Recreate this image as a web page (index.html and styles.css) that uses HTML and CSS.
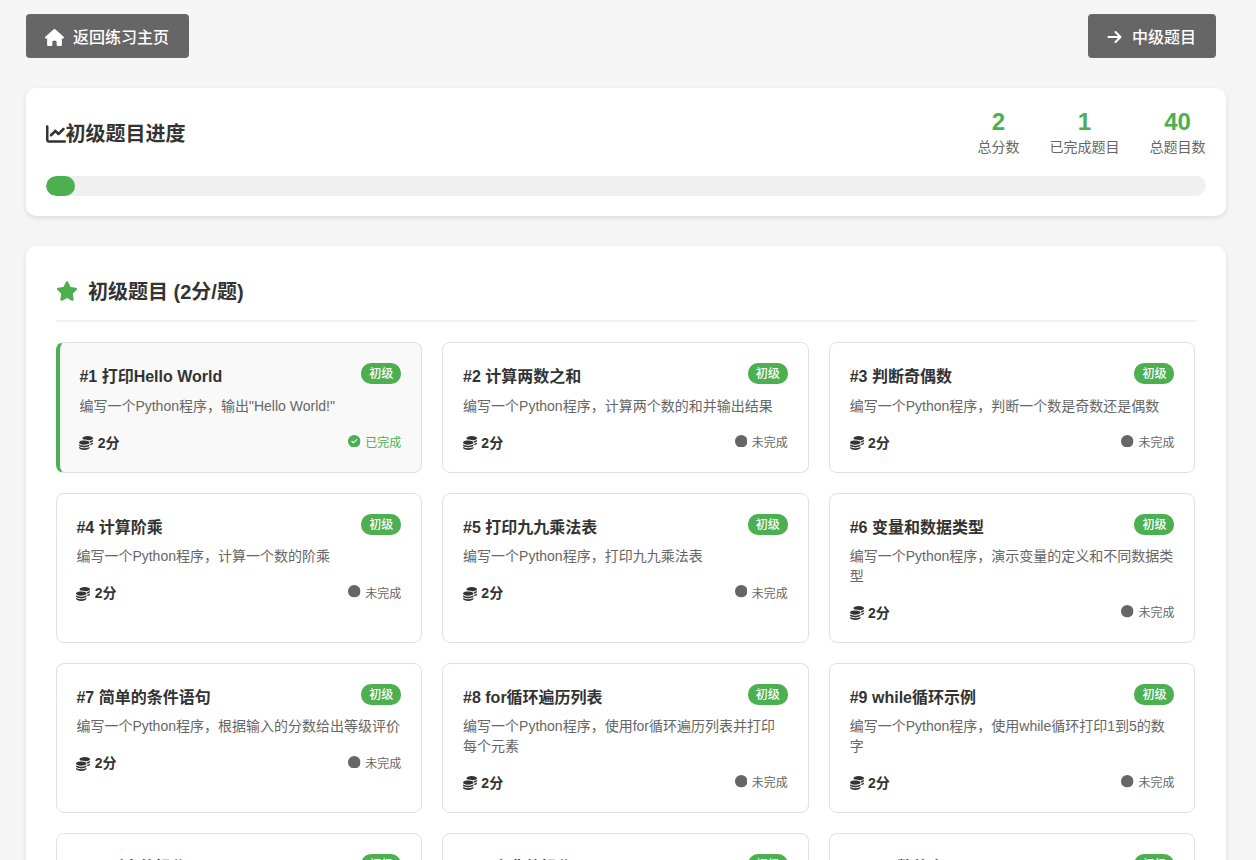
FILE: index.html
```html
<!DOCTYPE html>
<html lang="zh-CN">
<head>
<meta charset="utf-8">
<title>初级题目</title>
<link rel="stylesheet" href="styles.css">
</head>
<body>
<svg class="sprite" width="0" height="0" aria-hidden="true">
<symbol id="i-home" viewBox="0 0 576 512"><path d="M575.8 255.5c0 18-15 32.1-32 32.1h-32l.7 160.2c0 2.7-.2 5.4-.5 8.1V472c0 22.1-17.9 40-40 40H456c-1.1 0-2.2 0-3.3-.1c-1.4 .1-2.8 .1-4.2 .1H416 392c-22.1 0-40-17.9-40-40V448 384c0-17.7-14.3-32-32-32H256c-17.7 0-32 14.3-32 32v64 24c0 22.1-17.9 40-40 40H160 128.1c-1.5 0-3-.1-4.5-.2c-1.2 .1-2.4 .2-3.6 .2H104c-22.1 0-40-17.9-40-40V360c0-.9 0-1.9 .1-2.8V287.6H32c-18 0-32-14-32-32.1c0-9 3-17 10-24L266.4 8c7-7 15-8 22-8s15 2 21 7L564.8 231.5c8 7 12 15 11 24z"/></symbol>
<symbol id="i-arrow" viewBox="0 0 448 512"><path d="M438.6 278.6c12.5-12.5 12.5-32.8 0-45.3l-160-160c-12.5-12.5-32.8-12.5-45.3 0s-12.5 32.8 0 45.3L338.8 224 32 224c-17.7 0-32 14.3-32 32s14.3 32 32 32l306.7 0L233.4 393.4c-12.5 12.5-12.5 32.8 0 45.3s32.8 12.5 45.3 0l160-160z"/></symbol>
<symbol id="i-chart" viewBox="0 0 512 512"><path d="M64 64c0-17.7-14.3-32-32-32S0 46.3 0 64V400c0 44.2 35.8 80 80 80H480c17.7 0 32-14.3 32-32s-14.3-32-32-32H80c-8.8 0-16-7.2-16-16V64zm406.6 86.6c12.5-12.5 12.5-32.8 0-45.3s-32.8-12.5-45.3 0L320 210.7l-57.4-57.4c-12.5-12.5-32.8-12.5-45.3 0l-112 112c-12.5 12.5-12.5 32.8 0 45.3s32.8 12.5 45.3 0L240 221.3l57.4 57.4c12.5 12.5 32.8 12.5 45.3 0l128-128z"/></symbol>
<symbol id="i-star" viewBox="0 0 576 512"><path d="M316.9 18C311.6 7 300.4 0 288.1 0s-23.4 7-28.8 18L195 150.3 51.4 171.5c-12 1.8-22 10.2-25.7 21.7s-.7 24.2 7.9 32.7L137.8 329 113.2 474.7c-2 12 3 24.2 12.9 31.3s23 8 33.8 2.3l128.3-68.5 128.3 68.5c10.8 5.7 23.9 4.9 33.8-2.3s14.9-19.3 12.9-31.3L438.5 329 542.7 225.9c8.6-8.5 11.7-21.2 7.9-32.7s-13.7-19.9-25.7-21.7L381.2 150.3 316.9 18z"/></symbol>
<symbol id="i-coins" viewBox="0 0 512 512"><path d="M512 80c0 18-14.3 34.6-38.4 48c-29.1 16.1-72.5 27.5-122.3 30.9c-3.7-1.8-7.4-3.5-11.3-5C300.6 137.4 248.2 128 192 128c-8.3 0-16.4 .2-24.5 .6l-1.1-.6C142.3 114.6 128 98 128 80c0-44.2 86-80 192-80S512 35.8 512 80zM160.7 161.1c10.2-.7 20.7-1.1 31.3-1.1c62.2 0 117.4 12.3 152.5 31.4C369.3 204.9 384 221.7 384 240c0 4-.7 7.9-2.1 11.7c-4.6 13.2-17 25.3-35 35.5c0 0 0 0 0 0c-.1 .1-.3 .1-.4 .2l0 0 0 0c-.3 .2-.6 .3-.9 .5c-35 19.4-90.8 32-153.6 32c-59.6 0-112.9-11.3-148.2-29.1c-1.9-.9-3.7-1.9-5.5-2.9C14.3 274.6 0 258 0 240c0-34.8 53.4-64.5 128-75.4c10.5-1.5 21.4-2.7 32.7-3.5zM416 240c0-21.9-10.6-39.9-24.1-53.4c28.3-4.4 54.2-11.4 76.2-20.5c16.3-6.8 31.5-15.2 43.9-25.5V176c0 19.3-16.5 37.1-43.8 50.9c-14.6 7.4-32.4 13.7-52.4 18.5c.1-1.8 .2-3.5 .2-5.3zm-32 96c0 18-14.3 34.6-38.4 48c-1.8 1-3.6 1.9-5.5 2.9C304.9 404.7 251.6 416 192 416c-62.8 0-118.6-12.6-153.6-32C14.3 370.6 0 354 0 336V300.6c12.5 10.3 27.6 18.7 43.9 25.5C83.4 342.6 135.8 352 192 352s108.6-9.4 148.1-25.9c7.8-3.2 15.3-6.9 22.4-10.9c6.1-3.4 11.8-7.2 17.2-11.2c1.5-1.1 2.9-2.3 4.3-3.4V304v5.7V336zm32 0V304 278.1c19-4.2 36.5-9.5 52.1-16c16.3-6.8 31.5-15.2 43.9-25.5V272c0 10.5-5 21-14.9 30.9c-16.3 16.3-45 29.7-81 38.4c.1-1.7 .1-3.5 .1-5.3zM192 448c56.2 0 108.6-9.4 148.1-25.9c16.3-6.8 31.5-15.2 43.9-25.5V432c0 44.2-86 80-192 80S0 476.2 0 432V396.6c12.5 10.3 27.6 18.7 43.9 25.5C83.4 438.6 135.8 448 192 448z"/></symbol>
<symbol id="i-check" viewBox="0 0 512 512"><path d="M256 512A256 256 0 1 0 256 0a256 256 0 1 0 0 512zM369 209L241 337c-9.4 9.4-24.6 9.4-33.9 0l-64-64c-9.4-9.4-9.4-24.6 0-33.9s24.6-9.4 33.9 0l47 47L335 175c9.4-9.4 24.6-9.4 33.9 0s9.4 24.6 0 33.9z"/></symbol>
<symbol id="i-circle" viewBox="0 0 512 512"><circle cx="256" cy="256" r="256"/></symbol>
</svg>
<div class="page">
  <nav class="topbar">
    <a class="btn"><svg class="btn-icon home"><use href="#i-home"/></svg>返回练习主页</a>
    <a class="btn"><svg class="btn-icon arrow"><use href="#i-arrow"/></svg>中级题目</a>
  </nav>

  <section class="progress-card">
    <div class="progress-head">
      <h2 class="progress-title"><svg class="chart"><use href="#i-chart"/></svg>初级题目进度</h2>
      <div class="stats">
        <div class="stat"><div class="stat-num">2</div><div class="stat-label">总分数</div></div>
        <div class="stat"><div class="stat-num">1</div><div class="stat-label">已完成题目</div></div>
        <div class="stat"><div class="stat-num">40</div><div class="stat-label">总题目数</div></div>
      </div>
    </div>
    <div class="bar"><div class="bar-fill" style="width:2.5%"></div></div>
  </section>

  <section class="section">
    <h2 class="section-title"><svg class="star"><use href="#i-star"/></svg>初级题目 (2分/题)</h2>
    <div class="grid">
      <article class="card done">
        <div class="card-head"><h3 class="card-title">#1 打印Hello World</h3><span class="badge">初级</span></div>
        <p class="desc">编写一个Python程序，输出"Hello World!"</p>
        <div class="card-foot"><span class="points"><svg class="coins"><use href="#i-coins"/></svg>2分</span><span class="status ok"><svg class="dot"><use href="#i-check"/></svg>已完成</span></div>
      </article>
      <article class="card">
        <div class="card-head"><h3 class="card-title">#2 计算两数之和</h3><span class="badge">初级</span></div>
        <p class="desc">编写一个Python程序，计算两个数的和并输出结果</p>
        <div class="card-foot"><span class="points"><svg class="coins"><use href="#i-coins"/></svg>2分</span><span class="status"><svg class="dot"><use href="#i-circle"/></svg>未完成</span></div>
      </article>
      <article class="card">
        <div class="card-head"><h3 class="card-title">#3 判断奇偶数</h3><span class="badge">初级</span></div>
        <p class="desc">编写一个Python程序，判断一个数是奇数还是偶数</p>
        <div class="card-foot"><span class="points"><svg class="coins"><use href="#i-coins"/></svg>2分</span><span class="status"><svg class="dot"><use href="#i-circle"/></svg>未完成</span></div>
      </article>
      <article class="card">
        <div class="card-head"><h3 class="card-title">#4 计算阶乘</h3><span class="badge">初级</span></div>
        <p class="desc">编写一个Python程序，计算一个数的阶乘</p>
        <div class="card-foot"><span class="points"><svg class="coins"><use href="#i-coins"/></svg>2分</span><span class="status"><svg class="dot"><use href="#i-circle"/></svg>未完成</span></div>
      </article>
      <article class="card">
        <div class="card-head"><h3 class="card-title">#5 打印九九乘法表</h3><span class="badge">初级</span></div>
        <p class="desc">编写一个Python程序，打印九九乘法表</p>
        <div class="card-foot"><span class="points"><svg class="coins"><use href="#i-coins"/></svg>2分</span><span class="status"><svg class="dot"><use href="#i-circle"/></svg>未完成</span></div>
      </article>
      <article class="card">
        <div class="card-head"><h3 class="card-title">#6 变量和数据类型</h3><span class="badge">初级</span></div>
        <p class="desc">编写一个Python程序，演示变量的定义和不同数据类型</p>
        <div class="card-foot"><span class="points"><svg class="coins"><use href="#i-coins"/></svg>2分</span><span class="status"><svg class="dot"><use href="#i-circle"/></svg>未完成</span></div>
      </article>
      <article class="card">
        <div class="card-head"><h3 class="card-title">#7 简单的条件语句</h3><span class="badge">初级</span></div>
        <p class="desc">编写一个Python程序，根据输入的分数给出等级评价</p>
        <div class="card-foot"><span class="points"><svg class="coins"><use href="#i-coins"/></svg>2分</span><span class="status"><svg class="dot"><use href="#i-circle"/></svg>未完成</span></div>
      </article>
      <article class="card">
        <div class="card-head"><h3 class="card-title">#8 for循环遍历列表</h3><span class="badge">初级</span></div>
        <p class="desc">编写一个Python程序，使用for循环遍历列表并打印每个元素</p>
        <div class="card-foot"><span class="points"><svg class="coins"><use href="#i-coins"/></svg>2分</span><span class="status"><svg class="dot"><use href="#i-circle"/></svg>未完成</span></div>
      </article>
      <article class="card">
        <div class="card-head"><h3 class="card-title">#9 while循环示例</h3><span class="badge">初级</span></div>
        <p class="desc">编写一个Python程序，使用while循环打印1到5的数字</p>
        <div class="card-foot"><span class="points"><svg class="coins"><use href="#i-coins"/></svg>2分</span><span class="status"><svg class="dot"><use href="#i-circle"/></svg>未完成</span></div>
      </article>
      <article class="card">
        <div class="card-head"><h3 class="card-title">#10 列表的操作</h3><span class="badge">初级</span></div>
      </article>
      <article class="card">
        <div class="card-head"><h3 class="card-title">#11 字典的操作</h3><span class="badge">初级</span></div>
      </article>
      <article class="card">
        <div class="card-head"><h3 class="card-title">#12 函数的定义</h3><span class="badge">初级</span></div>
      </article>
    </div>
  </section>
</div>
</body>
</html>
```
FILE: styles.css
```css
* { box-sizing: border-box; }
html, body { margin: 0; padding: 0; }
body {
  background: #f5f5f5;
  color: #333;
  font-family: "Liberation Sans", "Noto Sans CJK SC", sans-serif;
  line-height: 1.2;
}
.sprite { position: absolute; }
.page { width: 1200px; margin-left: 25.5px; padding-top: 14px; padding-bottom: 30px; }

.topbar { display: flex; justify-content: space-between; padding-right: 9.5px; margin-bottom: 30px; }
.btn {
  display: flex; align-items: center; height: 44px; padding: 4px 20px 0 19.5px;
  background: #666; color: #fff; border-radius: 4px; font-size: 16px; font-weight: 500;
}
.btn-icon { fill: #fff; margin: 0 9px 2px 0; height: 17px; }
.btn-icon.home { width: 19px; }
.btn-icon.arrow { width: 15px; height: 16px; margin-right: 9.5px; }

.progress-card {
  background: #fff; border-radius: 10px; padding: 20px;
  box-shadow: 0 2px 5px rgba(0,0,0,.1); margin-bottom: 30px; height: 128px;
}
.progress-head { display: flex; justify-content: space-between; align-items: center; margin-bottom: 18px; }
.progress-title { margin: 0; padding-top: 2px; font-size: 20px; font-weight: 700; display: flex; align-items: center; }
.chart { width: 20px; height: 20px; fill: #333; }
.stats { display: flex; gap: 30px; }
.stat { text-align: center; }
.stat-num { font-size: 24px; font-weight: 700; color: #4caf50; line-height: 28px; }
.stat-label { font-size: 14px; color: #666; line-height: 22px; }
.bar { height: 20px; background: #f0f0f0; border-radius: 10px; overflow: hidden; }
.bar-fill { height: 100%; background: #4caf50; border-radius: 10px; }

.section { background: #fff; border-radius: 10px; padding: 30px; box-shadow: 0 2px 5px rgba(0,0,0,.1); }
.section-title {
  margin: 0 0 20px; padding-bottom: 12px; border-bottom: 2px solid #f0f0f0;
  font-size: 20px; font-weight: 700; display: flex; align-items: center; line-height: 32px;
}
.star { width: 22px; height: 20px; fill: #4caf50; margin: 0 10.5px 2px 0; }
.grid { display: grid; grid-template-columns: repeat(3, 1fr); gap: 20px; }
.card { border: 1px solid #e0e0e0; border-radius: 8px; padding: 20px 20px 20px 19.9px; background: #fff; }
.card.done { background: #f9f9f9; border-left: 4px solid #4caf50; }
.card-head { display: flex; justify-content: space-between; align-items: flex-start; margin-bottom: 10.4px; }
.card-title { margin: 0; font-size: 16px; font-weight: 700; padding-top: 4px; }
.badge {
  background: #4caf50; color: #fff; font-size: 12px; padding: 4px 8px 2px;
  border-radius: 10px; font-weight: 500; line-height: 15px; flex: none;
}
.desc { margin: 0 0 18.6px; font-size: 14px; color: #666; line-height: 19.6px; }
.card-foot { display: flex; justify-content: space-between; align-items: center; }
.points { display: flex; align-items: center; font-size: 14px; font-weight: 700; }
.coins { width: 14px; height: 14px; fill: #333; margin-right: 4.3px; }
.status { display: flex; align-items: center; font-size: 12px; color: #666; }
.status.ok { color: #4caf50; }
.dot { width: 12.5px; height: 12.5px; fill: #666; margin-right: 4.5px; position: relative; top: -2px; }
.status.ok .dot { fill: #4caf50; }
```
